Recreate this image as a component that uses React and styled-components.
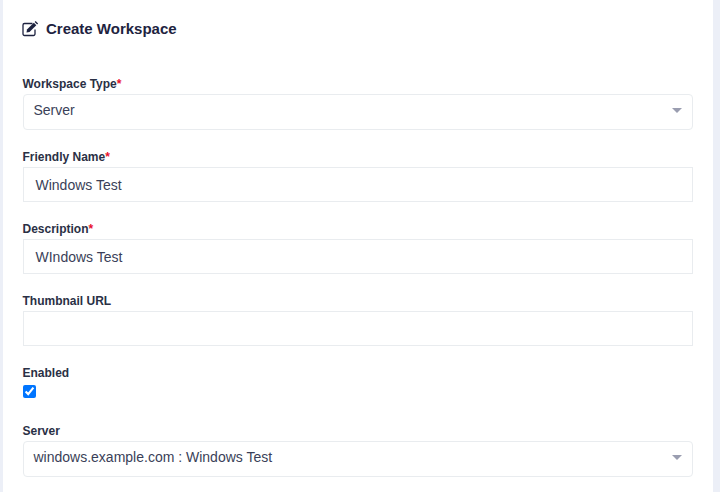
import React from 'react';
import styled, { createGlobalStyle } from 'styled-components';

const GlobalStyle = createGlobalStyle`
  html, body {
    margin: 0;
    padding: 0;
    height: 492px;
    overflow: hidden;
    background: #eceff7;
  }
`;

const Page = styled.div`
  height: 492px;
  padding: 0 7px 0 3px;
  overflow: hidden;
  font-family: "Liberation Sans", Arial, sans-serif;
  color: #252a43;
`;

const Card = styled.div`
  background: #fff;
  height: 100%;
  padding: 18px 20px 0 19px;
  box-sizing: border-box;
`;

const Title = styled.h2`
  display: flex;
  align-items: center;
  gap: 7px;
  margin: 0 0 37px;
  height: 20px;
  font-size: 15px;
  font-weight: 700;
  color: #1e2340;
`;

const EditIcon = () => (
  <svg width="17" height="17" viewBox="0 0 17 17" fill="none">
    <path
      d="M10.5 3.5H2.5a1.5 1.5 0 0 0-1.5 1.5v9a1.5 1.5 0 0 0 1.5 1.5h9a1.5 1.5 0 0 0 1.5-1.5V9.5"
      stroke="#1e2340"
      strokeWidth="1.3"
    />
    <path d="M4.5 12.5 5 9.5 11.8 2.7 14.3 5.2 7.5 12Z" fill="#1e2340" />
    <path d="M12.6 1.9 13.6 0.9 16.1 3.4 15.1 4.4Z" fill="#1e2340" />
  </svg>
);

const Field = styled.div`
  margin-bottom: ${(p) => p.$gap || 18}px;
  padding-left: 1px;
`;

const Label = styled.label`
  display: block;
  height: 16px;
  padding-top: 1px;
  line-height: 17px;
  margin-left: -0.5px;
  font-size: 12px;
  font-weight: 700;
  color: #2a3045;
`;

const Required = styled.span`
  color: #e8112d;
`;

const TextInput = styled.div`
  height: 35px;
  line-height: 34px;
  margin-top: 2px;
  padding: 0 11.5px;
  border: 1px solid #e9ecef;
  box-sizing: border-box;
  font-size: 14px;
  color: #3a3f58;
  background: #fff;
`;

const SelectBox = styled.div`
  display: flex;
  align-items: center;
  justify-content: space-between;
  height: 36px;
  margin-top: 2px;
  padding: 0 10px 4px 9.5px;
  border: 1px solid #e9ecef;
  border-radius: 4px;
  box-sizing: border-box;
  font-size: 14px;
  color: #3a3f58;
  background: #fff;
`;

const Caret = styled.span`
  width: 0;
  height: 0;
  border-left: 5px solid transparent;
  border-right: 5px solid transparent;
  border-top: 5px solid #9a9db0;
  margin-top: 1px;
`;

const Check = styled.input`
  display: block;
  width: 13px;
  height: 13px;
  margin: 4px 0 0 0;
  accent-color: #0075ff;
`;

const Select = ({ label, value, required }) => (
  <Field>
    <Label>
      {label}
      {required && <Required>*</Required>}
    </Label>
    <SelectBox>
      <span>{value}</span>
      <Caret />
    </SelectBox>
  </Field>
);

const Input = ({ label, value, required }) => (
  <Field>
    <Label>
      {label}
      {required && <Required>*</Required>}
    </Label>
    <TextInput>{value}</TextInput>
  </Field>
);

export default function App() {
  return (
    <>
      <GlobalStyle />
      <Page>
        <Card>
          <Title>
            <EditIcon />
            Create Workspace
          </Title>
          <Select label="Workspace Type" value="Server" required />
          <Input label="Friendly Name" value="Windows Test" required />
          <Input label="Description" value="WIndows Test" required />
          <Input label="Thumbnail URL" value="" />
          <Field $gap={24}>
            <Label>Enabled</Label>
            <Check type="checkbox" defaultChecked />
          </Field>
          <Select label="Server" value="windows.example.com : Windows Test" />
        </Card>
      </Page>
    </>
  );
}
